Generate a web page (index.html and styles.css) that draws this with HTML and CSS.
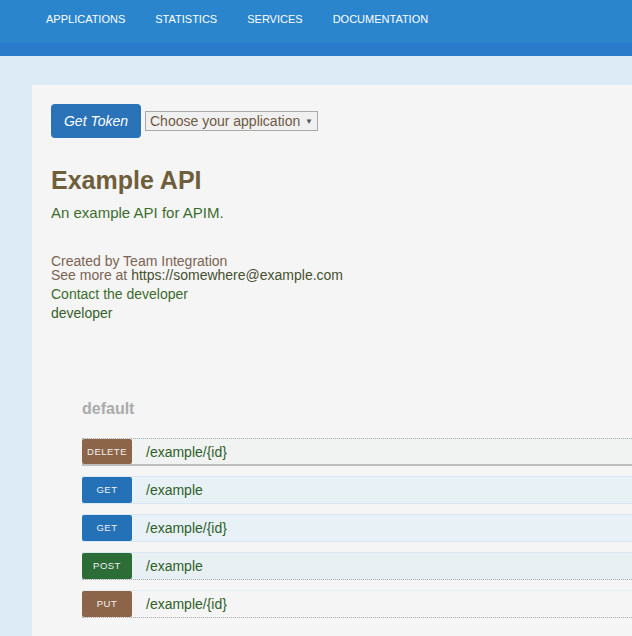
FILE: index.html
```html
<!DOCTYPE html>
<html>
<head>
<meta charset="utf-8">
<link rel="stylesheet" href="styles.css">
</head>
<body>
<header class="topbar">
  <nav class="nav">
    <a class="nav-item">APPLICATIONS</a>
    <a class="nav-item">STATISTICS</a>
    <a class="nav-item">SERVICES</a>
    <a class="nav-item">DOCUMENTATION</a>
  </nav>
</header>
<main class="page">
  <section class="card">
    <div class="toolbar">
      <button class="btn-token">Get Token</button>
      <div class="select">Choose your application <span class="caret">▼</span></div>
    </div>
    <h1 class="title">Example API</h1>
    <p class="desc">An example API for APIM.</p>
    <div class="info">
      <div class="created">Created by Team Integration</div>
      <div class="seemore">See more at <span class="link">https://somewhere@example.com</span></div>
      <div class="contact">Contact the developer</div>
      <div class="dev">developer</div>
    </div>
    <div class="ops">
      <h2 class="group">default</h2>
      <div class="op op-delete"><span class="badge b-brown">DELETE</span><span class="path">/example/{id}</span></div>
      <div class="op op-get"><span class="badge b-blue">GET</span><span class="path">/example</span></div>
      <div class="op op-get"><span class="badge b-blue">GET</span><span class="path">/example/{id}</span></div>
      <div class="op op-post"><span class="badge b-green">POST</span><span class="path">/example</span></div>
      <div class="op op-put"><span class="badge b-brown">PUT</span><span class="path">/example/{id}</span></div>
    </div>
  </section>
</main>
</body>
</html>
```
FILE: styles.css
```css
html, body {
  margin: 0;
  padding: 0;
  height: 100%;
  overflow: hidden;
}
body {
  font-family: "Liberation Sans", Arial, sans-serif;
  background: #dcebf6;
}
.topbar {
  height: 43px;
  background: #2a85cd;
  border-bottom: 13px solid #2a7cca;
}
.nav {
  display: flex;
  padding-left: 31px;
  height: 38px;
  align-items: center;
}
.nav-item {
  color: #ffffff;
  font-size: 11px;
  padding: 0 15px;
}
.page {
  padding: 29px 0 0 32px;
}
.card {
  background: #f5f5f5;
  padding: 19px 0 0 19px;
  height: 560px;
}
.toolbar {
  display: flex;
  align-items: center;
  gap: 4px;
}
.btn-token {
  width: 90px;
  height: 34px;
  border: none;
  border-radius: 4px;
  background: #2a73b9;
  color: #ffffff;
  font-family: "Liberation Sans", Arial, sans-serif;
  font-style: italic;
  font-size: 14px;
  padding: 0;
}
.select {
  border: 1px solid #a9a9a9;
  background: #f0f0f0;
  height: 18px;
  line-height: 18px;
  padding: 0 4px;
  font-size: 14px;
  color: #6f5a45;
  white-space: nowrap;
}
.caret {
  font-size: 8px;
  color: #555;
  vertical-align: 2px;
  margin-left: 1px;
}
.title {
  margin: 27px 0 0;
  font-size: 25px;
  line-height: 30px;
  font-weight: bold;
  color: #6f5e3c;
}
.desc {
  margin: 9px 0 0;
  font-size: 15px;
  line-height: 18px;
  color: #3c6d2f;
}
.info {
  margin-top: 32px;
  font-size: 14px;
}
.created, .seemore {
  line-height: 14px;
  color: #7c6352;
}
.seemore .link {
  color: #46502f;
}
.contact {
  margin-top: 3px;
  line-height: 19px;
  color: #3c6b2e;
}
.dev {
  line-height: 19px;
  color: #36602b;
}
.ops {
  margin-top: 76px;
  padding-left: 31px;
}
.group {
  margin: 0 0 19px;
  font-size: 16px;
  line-height: 20px;
  font-weight: bold;
  color: #ababab;
}
.op {
  display: flex;
  align-items: center;
  height: 26px;
  margin-bottom: 10px;
}
.op-delete {
  background: #f1f2f2;
  border-top: 1px dotted #a8a8a8;
  border-bottom: 2px solid #bdbdbd;
  height: 25px;
}
.op-get {
  background: #e8f1f6;
  border-top: 1px solid #d8e7f3;
  border-bottom: 1px solid #d8e7f3;
}
.op-post {
  background: #e8f0f3;
  border-top: 1px solid #dbe8f3;
  border-bottom: 1px dotted #a9a9a9;
}
.op-put {
  background: #f5f5f5;
  border-top: 1px solid #e3eeef;
  border-bottom: 1px dotted #a9a9a9;
}
.badge {
  width: 50px;
  height: 26px;
  line-height: 26px;
  text-align: center;
  font-size: 9.5px;
  letter-spacing: 0.5px;
  color: #f0f0f0;
  border-radius: 2px;
  flex: none;
}
.op-delete .badge { height: 25px; line-height: 25px; }
.b-brown { background: #8c6549; }
.b-blue { background: #2571b8; }
.b-green { background: #2c6c37; }
.path {
  margin-left: 14px;
  font-size: 14px;
  color: #2f5f29;
}
```
